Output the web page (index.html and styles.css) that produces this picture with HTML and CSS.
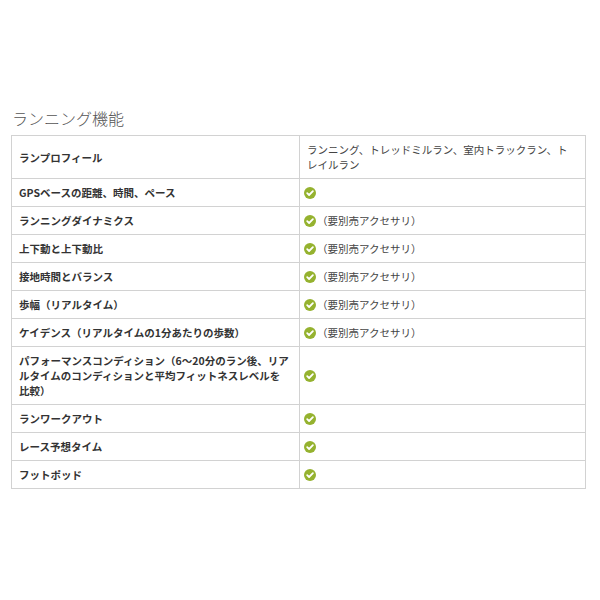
FILE: index.html
```html
<!DOCTYPE html>
<html lang="ja">
<head>
<meta charset="utf-8">
<link rel="stylesheet" href="styles.css">
</head>
<body>
<div class="wrap">
  <h2 class="title">ランニング機能</h2>
  <table class="spec">
    <colgroup><col class="c1"><col class="c2"></colgroup>
    <tr class="tall"><th>ランプロフィール</th><td>ランニング、トレッドミルラン、室内トラックラン、トレイルラン</td></tr>
    <tr><th>GPSベースの距離、時間、ペース</th><td><span class="chk"><svg viewBox="0 0 12 12"><circle cx="6" cy="6" r="6" fill="#95b22f"/><path d="M3.2 6.2 L5.1 8 L8.9 4.2" fill="none" stroke="#fff" stroke-width="1.8" stroke-linecap="round" stroke-linejoin="round"/></svg></span></td></tr>
    <tr><th>ランニングダイナミクス</th><td><span class="chk"><svg viewBox="0 0 12 12"><circle cx="6" cy="6" r="6" fill="#95b22f"/><path d="M3.2 6.2 L5.1 8 L8.9 4.2" fill="none" stroke="#fff" stroke-width="1.8" stroke-linecap="round" stroke-linejoin="round"/></svg></span>（要別売アクセサリ）</td></tr>
    <tr><th>上下動と上下動比</th><td><span class="chk"><svg viewBox="0 0 12 12"><circle cx="6" cy="6" r="6" fill="#95b22f"/><path d="M3.2 6.2 L5.1 8 L8.9 4.2" fill="none" stroke="#fff" stroke-width="1.8" stroke-linecap="round" stroke-linejoin="round"/></svg></span>（要別売アクセサリ）</td></tr>
    <tr><th>接地時間とバランス</th><td><span class="chk"><svg viewBox="0 0 12 12"><circle cx="6" cy="6" r="6" fill="#95b22f"/><path d="M3.2 6.2 L5.1 8 L8.9 4.2" fill="none" stroke="#fff" stroke-width="1.8" stroke-linecap="round" stroke-linejoin="round"/></svg></span>（要別売アクセサリ）</td></tr>
    <tr><th>歩幅（リアルタイム）</th><td><span class="chk"><svg viewBox="0 0 12 12"><circle cx="6" cy="6" r="6" fill="#95b22f"/><path d="M3.2 6.2 L5.1 8 L8.9 4.2" fill="none" stroke="#fff" stroke-width="1.8" stroke-linecap="round" stroke-linejoin="round"/></svg></span>（要別売アクセサリ）</td></tr>
    <tr><th>ケイデンス（リアルタイムの1分あたりの歩数）</th><td><span class="chk"><svg viewBox="0 0 12 12"><circle cx="6" cy="6" r="6" fill="#95b22f"/><path d="M3.2 6.2 L5.1 8 L8.9 4.2" fill="none" stroke="#fff" stroke-width="1.8" stroke-linecap="round" stroke-linejoin="round"/></svg></span>（要別売アクセサリ）</td></tr>
    <tr><th>パフォーマンスコンディション（6〜20分のラン後、リア<span class="nw">ルタ</span>イムのコンディションと平均フィットネスレベルを<span class="nw">比較）</span></th><td><span class="chk"><svg viewBox="0 0 12 12"><circle cx="6" cy="6" r="6" fill="#95b22f"/><path d="M3.2 6.2 L5.1 8 L8.9 4.2" fill="none" stroke="#fff" stroke-width="1.8" stroke-linecap="round" stroke-linejoin="round"/></svg></span></td></tr>
    <tr><th>ランワークアウト</th><td><span class="chk"><svg viewBox="0 0 12 12"><circle cx="6" cy="6" r="6" fill="#95b22f"/><path d="M3.2 6.2 L5.1 8 L8.9 4.2" fill="none" stroke="#fff" stroke-width="1.8" stroke-linecap="round" stroke-linejoin="round"/></svg></span></td></tr>
    <tr><th>レース予想タイム</th><td><span class="chk"><svg viewBox="0 0 12 12"><circle cx="6" cy="6" r="6" fill="#95b22f"/><path d="M3.2 6.2 L5.1 8 L8.9 4.2" fill="none" stroke="#fff" stroke-width="1.8" stroke-linecap="round" stroke-linejoin="round"/></svg></span></td></tr>
    <tr><th>フットポッド</th><td><span class="chk"><svg viewBox="0 0 12 12"><circle cx="6" cy="6" r="6" fill="#95b22f"/><path d="M3.2 6.2 L5.1 8 L8.9 4.2" fill="none" stroke="#fff" stroke-width="1.8" stroke-linecap="round" stroke-linejoin="round"/></svg></span></td></tr>
  </table>
</div>
</body>
</html>
```
FILE: styles.css
```css
html, body {
  margin: 0;
  padding: 0;
  background: #fff;
}
body {
  font-family: "Noto Sans CJK JP", "Noto Sans", sans-serif;
  color: #333;
}
.wrap {
  padding: 107px 15px 0 11px;
}
.title {
  margin: 0 0 0 1px;
  font-size: 16px;
  font-weight: 300;
  color: #555;
  line-height: 22px;
  height: 28px;
}
.spec {
  width: 574px;
  border-collapse: collapse;
  table-layout: fixed;
  font-size: 10.5px;
  line-height: 15px;
}
.c1 { width: 288px; }
.c2 { width: 286px; }
.spec th, .spec td {
  border: 1px solid #d2d2d2;
  padding: 6px 8px 6px 7px;
  text-align: left;
  vertical-align: middle;
}
.spec th {
  font-weight: 700;
  color: #333;
}
.spec td {
  font-weight: 400;
  color: #444;
  padding-left: 4px;
}
.spec tr.tall td {
  padding-left: 7px;
}
.nw {
  white-space: nowrap;
}
.chk {
  display: inline-block;
  width: 12px;
  height: 12px;
  vertical-align: -2px;
  margin-right: 1px;
}
.chk svg {
  display: block;
  width: 12px;
  height: 12px;
}
```
